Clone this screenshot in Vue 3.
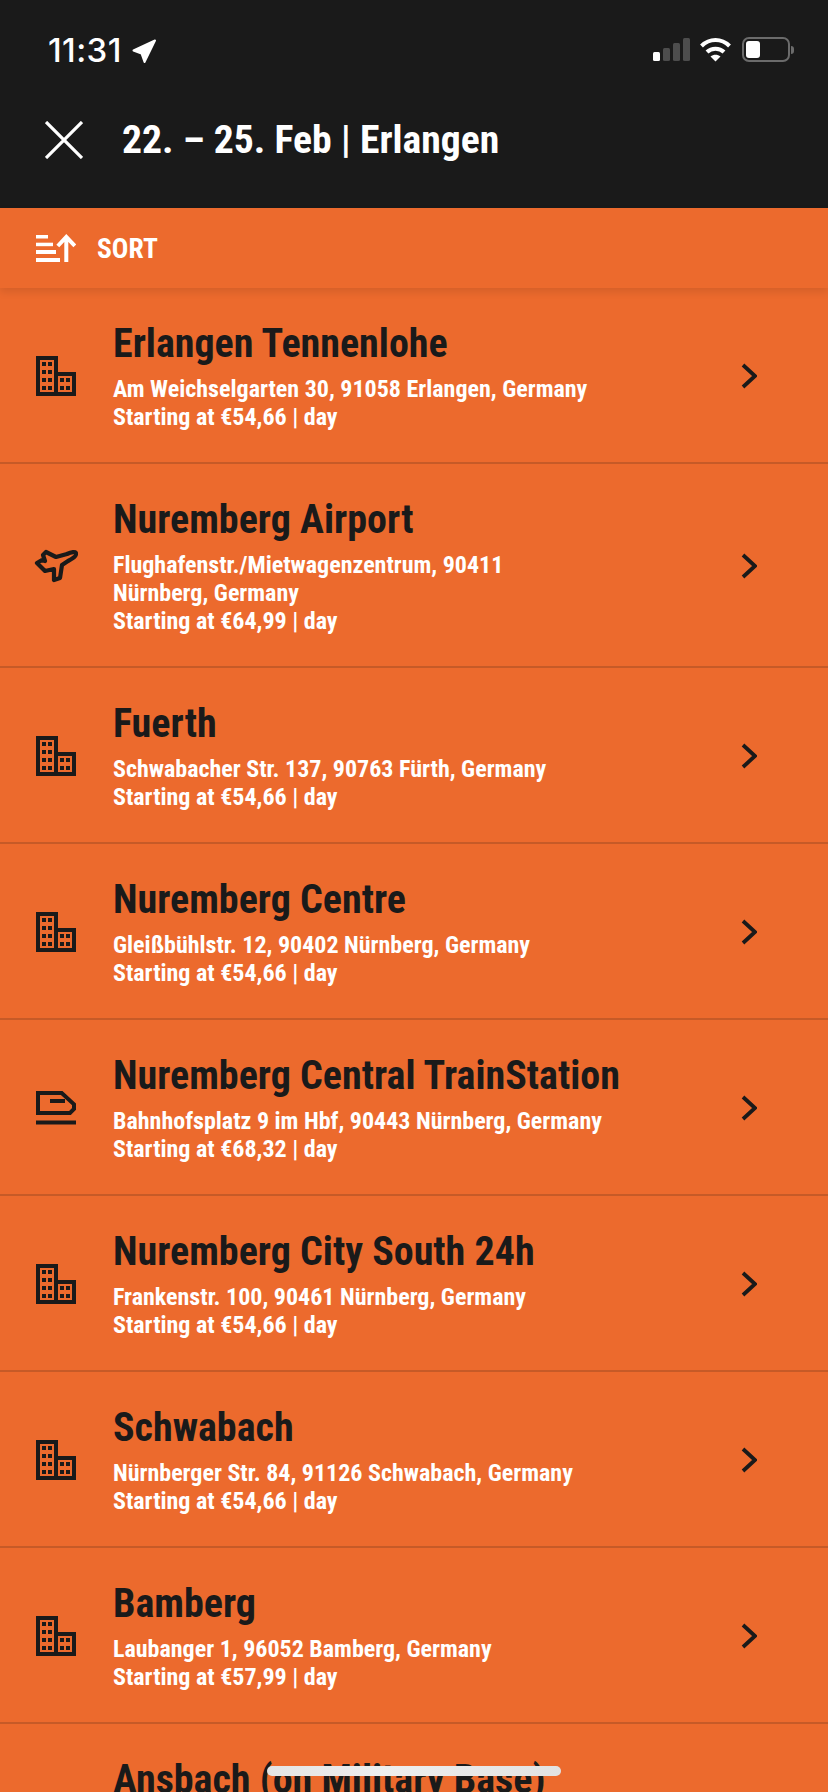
<script setup>
const rows = [
  { icon: 'building', name: 'Erlangen Tennenlohe', lines: ['Am Weichselgarten 30, 91058 Erlangen, Germany'], price: '€54,66' },
  { icon: 'plane', name: 'Nuremberg Airport', lines: ['Flughafenstr./Mietwagenzentrum, 90411', 'Nürnberg, Germany'], price: '€64,99' },
  { icon: 'building', name: 'Fuerth', lines: ['Schwabacher Str. 137, 90763 Fürth, Germany'], price: '€54,66' },
  { icon: 'building', name: 'Nuremberg Centre', lines: ['Gleißbühlstr. 12, 90402 Nürnberg, Germany'], price: '€54,66' },
  { icon: 'train', name: 'Nuremberg Central TrainStation', lines: ['Bahnhofsplatz 9 im Hbf, 90443 Nürnberg, Germany'], price: '€68,32' },
  { icon: 'building', name: 'Nuremberg City South 24h', lines: ['Frankenstr. 100, 90461 Nürnberg, Germany'], price: '€54,66' },
  { icon: 'building', name: 'Schwabach', lines: ['Nürnberger Str. 84, 91126 Schwabach, Germany'], price: '€54,66' },
  { icon: 'building', name: 'Bamberg', lines: ['Laubanger 1, 96052 Bamberg, Germany'], price: '€57,99' },
  { icon: '', name: 'Ansbach (on Military Base)', lines: [], price: '' }
]
</script>

<template>
  <div class="screen">
    <header class="top">
      <div class="status">
        <div class="clock">
          <span class="time">11:31</span>
          <svg class="loc" width="25" height="25" viewBox="0 0 25 25"><path d="M1.500 11.500 23 1.500 12.500 23 9.500 14.500Z" fill="#fff" stroke="#fff" stroke-width="2" stroke-linejoin="round"/></svg>
        </div>
        <div class="indicators">
          <svg class="sig" width="37" height="24" viewBox="0 0 37 24">
            <rect x="0" y="14" width="7" height="9" rx="1.500" fill="#fff"/>
            <rect x="10" y="10" width="7" height="13" rx="1.500" fill="#4d4d4d"/>
            <rect x="20" y="5" width="7" height="18" rx="1.500" fill="#4d4d4d"/>
            <rect x="30" y="0" width="7" height="23" rx="1.500" fill="#4d4d4d"/>
          </svg>
          <svg class="wifi" width="31" height="25" viewBox="0 0 31 25">
            <path d="M1.500 9C9.500 1 21.500 1 29.500 9" fill="none" stroke="#fff" stroke-width="4"/>
            <path d="M7 15C11.500 10.500 19.500 10.500 24 15" fill="none" stroke="#fff" stroke-width="4"/>
            <path d="M10.500 19.500 15.500 24.500 20.500 19.500C17.500 17 13.500 17 10.500 19.500Z" fill="#fff"/>
          </svg>
          <div class="battery">
            <div class="shell"><div class="fill"></div></div>
            <div class="nub"></div>
          </div>
        </div>
      </div>
      <div class="titlebar">
        <svg class="close" width="38" height="38" viewBox="0 0 38 38"><path d="M1 1 37 37M37 1 1 37" stroke="#fff" stroke-width="3.200" fill="none"/></svg>
        <h1 class="cond">22. – 25. Feb | Erlangen</h1>
      </div>
    </header>

    <div class="sortbar">
      <svg width="40" height="28" viewBox="0 0 40 28" fill="#fff">
        <rect x="0" y="1" width="12" height="3.500"/>
        <rect x="0" y="8.700" width="17" height="3.500"/>
        <rect x="0" y="16" width="20" height="4"/>
        <rect x="0" y="24" width="24" height="4"/>
        <path d="M30.300 28V3M21.800 12 30.300 3 38.800 12" fill="none" stroke="#fff" stroke-width="4"/>
      </svg>
      <span class="sort cond">SORT</span>
    </div>

    <ul class="list">
      <li v-for="r in rows" :key="r.name" class="row">
        <div class="icon">
          <svg v-if="r.icon === 'building'" width="40" height="40" viewBox="0 0 40 40">
            <path fill="#1a1a1a" fill-rule="evenodd" d="M0 0H22V16H40V40H0ZM4 4V36H18V4ZM22 20V36H36V20Z"/>
            <g fill="#1a1a1a">
              <rect x="6" y="6" width="4" height="4"/><rect x="12" y="6" width="4" height="4"/>
              <rect x="6" y="14" width="4" height="4"/><rect x="12" y="14" width="4" height="4"/>
              <rect x="6" y="22" width="4" height="4"/><rect x="12" y="22" width="4" height="4"/>
              <rect x="6" y="30" width="4" height="4"/><rect x="12" y="30" width="4" height="4"/>
              <rect x="24" y="22" width="4" height="4"/><rect x="30" y="22" width="4" height="4"/>
              <rect x="24" y="30" width="4" height="4"/><rect x="30" y="30" width="4" height="4"/>
            </g>
          </svg>
          <svg v-else-if="r.icon === 'plane'" class="plane" width="44" height="34" viewBox="0 0 44 34">
            <path d="M12 3 22 8 33 5C37 3 42 2 42 4.500 42.500 7 38 10 34 12L28 16 26 29 20 31 20 20 11 22 3 14 8 11 11 12 9 6Z" fill="none" stroke="#1a1a1a" stroke-width="4.200" stroke-linejoin="round"/>
          </svg>
          <svg v-else-if="r.icon === 'train'" width="40" height="34" viewBox="0 0 40 34">
            <path d="M0 31.500H40" stroke="#1a1a1a" stroke-width="4" fill="none"/>
            <path d="M2 2H25.700L38 13.300V18L34 22H2ZM14 10H29" stroke="#1a1a1a" stroke-width="4" fill="none"/>
          </svg>
        </div>
        <div class="text">
          <div class="name cond">{{ r.name }}</div>
          <div v-for="l in r.lines" :key="l" class="line cond">{{ l }}</div>
          <div v-if="r.price" class="line cond">Starting at {{ r.price }} | day</div>
        </div>
        <svg v-if="r.price" class="chev" width="16" height="26" viewBox="0 0 16 26"><path d="M2 2 14 13 2 24" fill="none" stroke="#1a1a1a" stroke-width="3.800"/></svg>
      </li>
    </ul>

    <div class="home"></div>
  </div>
</template>

<style scoped>
.screen {
  position: relative;
  width: 828px;
  height: 1792px;
  overflow: hidden;
  background: #ec6a2d;
  font-family: Roboto, "Liberation Sans", sans-serif;
}
.cond { font-stretch: 75%; }
.top { background: #1a1a1a; height: 208px; color: #fff; }
.status {
  height: 104px;
  display: flex;
  justify-content: space-between;
  align-items: flex-start;
  padding: 33px 34px 0 48px;
  box-sizing: border-box;
}
.clock { display: flex; align-items: center; gap: 10px; }
.time { font-family: Inter, sans-serif; font-size: 33px; font-weight: 500; line-height: 34px; letter-spacing: .4px; }
.loc { margin-top: 2px; }
.indicators { display: flex; align-items: center; gap: 10px; margin-top: 4px; }
.battery { display: flex; align-items: center; gap: 1px; margin-left: 1px; }
.shell { width: 48px; height: 25px; border: 2px solid #6b6b6b; border-radius: 7px; padding: 2px; box-sizing: border-box; }
.fill { width: 14px; height: 17px; background: #fff; border-radius: 3px; }
.nub { width: 3px; height: 8px; background: #6b6b6b; border-radius: 0 3px 3px 0; }
.titlebar { display: flex; align-items: center; height: 72px; padding-left: 45px; }
.close { margin-right: 39px; }
h1 { margin: 0; font-size: 39.7px; font-weight: 700; line-height: 48px; }
.sortbar {
  height: 80px;
  display: flex;
  align-items: center;
  gap: 21px;
  padding-left: 36px;
  box-shadow: 0 4px 8px rgba(0,0,0,.1);
  position: relative;
  color: #fff;
}
.sort { font-size: 27.5px; font-weight: 700; }
.list { list-style: none; margin: 0; padding: 0; }
.row {
  display: flex;
  align-items: center;
  border-bottom: 2px solid #c65a27;
  padding: 32px 0 31px;
  position: relative;
}
.icon { width: 113px; padding-left: 36px; margin-top: 1px; box-sizing: border-box; display: flex; flex: none; }
.plane { margin-left: -2px; margin-right: -2px; }
.text { flex: 1; color: #fff; }
.name { font-size: 40px; font-weight: 700; color: #1a1a1a; line-height: 48px; margin-bottom: 7px; }
.line { font-size: 24px; font-weight: 700; line-height: 28px; }
.chev { margin-right: 71px; margin-top: 1px; flex: none; }
.home {
  position: absolute;
  left: 267px;
  top: 1766px;
  width: 294px;
  height: 10px;
  border-radius: 5px;
  background: linear-gradient(90deg, #e4e4e4, #eeeeee 40%, #e2e2e2);
}
</style>
